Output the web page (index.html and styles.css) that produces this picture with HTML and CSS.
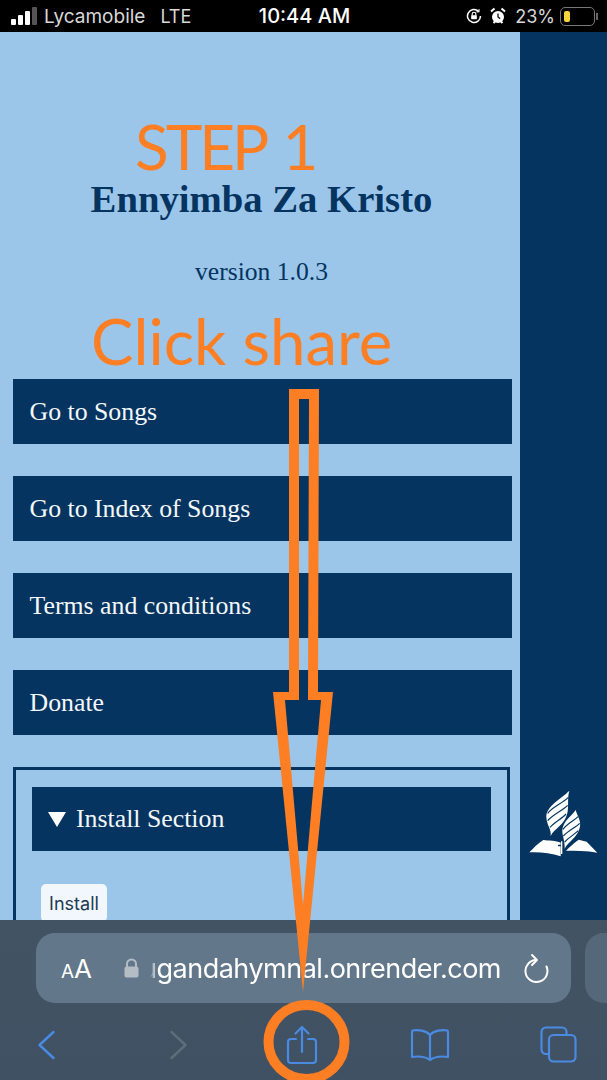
FILE: index.html
```html
<!DOCTYPE html>
<html lang="en">
<head>
    <meta charset="UTF-8">
    <meta name="viewport" content="width=device-width, initial-scale=1.0">
    <title>Ennyimba Za Kristo</title>
    <link rel="stylesheet" href="styles.css">
</head>
<body>
    <div id="phone">
        <div class="status-bar">
            <div class="status-left">
                <svg class="signal" width="27" height="18" viewBox="0 0 27 18">
                    <rect x="0" y="12" width="5" height="6" rx="1" fill="#fff"/>
                    <rect x="7" y="8" width="5" height="10" rx="1" fill="#fff"/>
                    <rect x="14" y="4" width="5" height="14" rx="1" fill="#fff"/>
                    <rect x="21" y="0" width="5" height="18" rx="1" fill="#555"/>
                </svg>
                <span>Lycamobile</span>
                <span class="network">LTE</span>
            </div>
            <div class="status-time">10:44 AM</div>
            <div class="status-right">
                <svg width="16" height="16" viewBox="0 0 16 16" fill="none" stroke="#fff" stroke-width="1.5">
                    <path d="M14.5 8a6.5 6.5 0 1 1-2-4.7"/>
                    <path d="M10.5 3.8l2.4-.2.2-2.4" stroke-width="1.2"/>
                    <rect x="5.2" y="7.2" width="5.6" height="4" fill="#fff" stroke="none"/>
                    <path d="M6.2 7.2V6a1.8 1.8 0 0 1 3.6 0v1.2" stroke-width="1.1"/>
                </svg>
                <svg class="alarm" width="16" height="18" viewBox="0 0 16 18">
                    <circle cx="8" cy="10" r="6" fill="#fff"/>
                    <path d="M8 6.5V10l2.2 1.6" fill="none" stroke="#111" stroke-width="1.3"/>
                    <path d="M1 4.5L4.5 1.5M15 4.5L11.5 1.5M3.5 16l1.5-1.5M12.5 16L11 14.5" stroke="#fff" stroke-width="2"/>
                </svg>
                <span class="percent">23%</span>
                <div class="battery"><div class="battery-level"></div></div>
                <div class="battery-nub"></div>
            </div>
        </div>

        <div class="page">
            <div class="main">
                <h1>Ennyimba Za Kristo</h1>
                <p class="version">version 1.0.3</p>
                <a class="menu-btn">Go to Songs</a>
                <a class="menu-btn">Go to Index of Songs</a>
                <a class="menu-btn">Terms and conditions</a>
                <a class="menu-btn">Donate</a>
                <div class="install-section">
                    <div class="install-head"><span class="caret"></span>Install Section</div>
                    <button class="install-btn">Install</button>
                </div>
            </div>
            <div class="side">
                <svg class="logo" width="87" height="100" viewBox="30 0 261 300">
                    <path fill="#fff" d="M178 62C152 88 108 108 109 142c1 24 16 36 13 56 10-22 42-32 50-68 5-24-1-44 6-68z"/>
                    <path fill="none" stroke="#04345f" stroke-width="3.500" d="M175 82c-18 18-50 30-62 48M173 106c-16 16-46 28-60 46M168 132c-12 14-34 24-48 40"/>
                    <path fill="#fff" d="M197 120c-14 20-38 34-40 60-1 18 8 30 7 56 8-20 40-34 46-66 3-18-8-32-13-50z"/>
                    <path fill="none" stroke="#04345f" stroke-width="3.500" d="M204 140c-12 12-34 22-45 38M209 160c-12 12-34 22-49 38M205 182c-10 10-28 20-41 34"/>
                    <path fill="#fff" d="M58 247c12-12 26-28 42-37 16 2 38 2 52 8v6h-8v5h8v30c-30-10-64-14-94-12z"/>
                    <path fill="#fff" d="M168 242c12-12 24-24 38-33 8 2 16 4 24 6l32 33c-32-6-66-6-94-6z"/>
                    <path fill="#fff" d="M153 214h4v38h-4z"/>
                </svg>
            </div>
        </div>

        <div class="toolbar">
            <div class="url-row">
                <div class="url-pill">
                    <span class="text-size"><span class="small-a">A</span>A</span>
                    <svg class="lock" width="17" height="20" viewBox="0 0 17 20">
                        <path d="M4 9V6a4.5 4.5 0 0 1 9 0v3" fill="none" stroke="#b4bcc6" stroke-width="2"/>
                        <rect x="1.5" y="8.5" width="14" height="11" rx="2" fill="#b4bcc6"/>
                    </svg>
                    <span class="url">ugandahymnal.onrender.com</span>
                    <svg class="reload" width="26" height="30" viewBox="0 0 26 30" fill="none" stroke="#fff" stroke-width="2" stroke-linecap="round" stroke-linejoin="round">
                        <path d="M23.500 13.500A11 11 0 1 1 13 7"/>
                        <path d="M9 2l5 5-5 5"/>
                    </svg>
                </div>
                <div class="next-pill"></div>
            </div>
            <div class="nav-row">
                <svg width="19" height="30" viewBox="0 0 19 30" fill="none" stroke="#4a8ae2" stroke-width="2.4" stroke-linecap="round" stroke-linejoin="round">
                    <path d="M16.5 2L2.5 15l14 13"/>
                </svg>
                <svg class="nav-forward" width="19" height="30" viewBox="0 0 19 30" fill="none" stroke="#5d6d7c" stroke-width="2.4" stroke-linecap="round" stroke-linejoin="round">
                    <path d="M2.5 2l14 13-14 13"/>
                </svg>
                <svg width="32" height="40" viewBox="0 0 32 40" fill="none" stroke="#4a8ae2" stroke-width="2.2" stroke-linecap="round" stroke-linejoin="round">
                    <path d="M10 14H5a3 3 0 0 0-3 3v18a3 3 0 0 0 3 3h22a3 3 0 0 0 3-3V17a3 3 0 0 0-3-3h-5"/>
                    <path d="M16 27V2M9.5 8.500L16 2l6.500 6.500"/>
                </svg>
                <svg width="40" height="34" viewBox="0 0 40 34" fill="none" stroke="#4a8ae2" stroke-width="2.2" stroke-linecap="round" stroke-linejoin="round">
                    <path d="M20 7C16 2.500 8 1.500 2.500 2.500 2 3 2 4 2 5v24c6-1 13-.5 18 3 5-3.500 12-4 18-3V5c0-1 0-2-.5-2.500C32 1.500 24 2.500 20 7zM20 7v25"/>
                </svg>
                <svg width="37" height="37" viewBox="0 0 37 37" fill="none" stroke="#4a8ae2" stroke-width="2.2" stroke-linejoin="round">
                    <path d="M8 28H6a4.500 4.500 0 0 1-4.500-4.500V6A4.500 4.500 0 0 1 6 1.500h16A4.500 4.500 0 0 1 26.500 6v2"/>
                    <rect x="9" y="9" width="26.500" height="26.500" rx="4.500"/>
                </svg>
            </div>
        </div>

        <!-- orange notes drawn over the screenshot -->
        <div class="note note-step">STEP 1</div>
        <div class="note note-click">Click share</div>
        <svg class="markup" width="607" height="1080" viewBox="0 0 607 1080">
            <path fill="#fd7e23" fill-rule="evenodd" d="M289 389H319L318 692H333L303 992 273 692H289ZM299 399V700H285L303 905 321 700H308L309 399Z"/>
            <ellipse cx="306.500" cy="1042" rx="38" ry="37" fill="none" stroke="#fd7e23" stroke-width="10"/>
        </svg>
    </div>
</body>
</html>
```

FILE: styles.css
```css
* {
    box-sizing: border-box;
    margin: 0;
    padding: 0;
}
body {
    background-color: black;
    overflow: hidden;
}
#phone {
    position: relative;
    display: flex;
    flex-direction: column;
    width: 607px;
    height: 1080px;
    overflow: hidden;
}

/* status bar */
.status-bar {
    display: grid;
    grid-template-columns: 1fr auto 1fr;
    align-items: center;
    height: 32px;
    padding: 0 9px 0 11px;
    background-color: black;
    color: #f2f2f2;
    font-family: Inter, "Noto Sans", sans-serif;
    font-size: 19px;
}
.status-left {
    display: flex;
    align-items: center;
    gap: 6px;
    color: #d8d8d8;
}
.network {
    margin-left: 9px;
    font-size: 18px;
}
.status-time {
    font-size: 20px;
    font-weight: 500;
    color: #fff;
}
.status-right {
    display: flex;
    align-items: center;
    justify-content: flex-end;
    color: #d8d8d8;
}
.alarm {
    margin-left: 8px;
}
.percent {
    margin: 0 5px 0 9px;
    font-size: 18px;
}
.battery {
    width: 35px;
    height: 19px;
    padding: 3px;
    border: 1px solid #777;
    border-radius: 5px;
}
.battery-level {
    width: 6px;
    height: 100%;
    background-color: #f8d53c;
    border-radius: 2px;
}
.battery-nub {
    width: 2px;
    height: 7px;
    margin-left: 1px;
    background-color: #666;
}

/* page behind the toolbar */
.page {
    display: flex;
    flex: 1;
    min-height: 0;
    overflow: hidden;
}
.main {
    width: 520px;
    padding: 146px 10px 0 13px;
    background-color: #9bc6ea;
    font-family: "Liberation Serif", serif;
}
.main h1 {
    font-size: 38.7px;
    line-height: 43px;
    text-align: center;
    color: #04345f;
}
.version {
    margin: 37px 0 0;
    font-size: 25.6px;
    line-height: 28px;
    text-align: center;
    color: #04345f;
}
.menu-btn {
    display: flex;
    align-items: center;
    height: 65px;
    margin: 0 -2px 32px 0;
    padding-left: 16.5px;
    background-color: #04345f;
    color: #f4f8fc;
    font-size: 25.8px;
}
.version + .menu-btn {
    margin-top: 93px;
}
.install-section {
    padding: 17px 16px 16px;
    border: 3px solid #04345f;
}
.install-head {
    display: flex;
    align-items: center;
    height: 64px;
    padding-left: 16px;
    background-color: #04345f;
    color: #f4f8fc;
    font-size: 25.8px;
}
.caret {
    width: 0;
    height: 0;
    margin-right: 10px;
    border-left: 9px solid transparent;
    border-right: 9px solid transparent;
    border-top: 15px solid #fff;
}
.install-btn {
    display: block;
    width: 66px;
    height: 38px;
    margin: 33px 0 0 9px;
    border: none;
    border-radius: 5px;
    background-color: #f1f7fc;
    color: #1d3a54;
    font-family: Inter, sans-serif;
    font-size: 18px;
}
.side {
    flex: 1;
    padding-top: 738px;
    background-color: #04345f;
}
.logo {
    display: block;
}

/* safari toolbar */
.toolbar {
    height: 160px;
    padding-top: 13px;
    background-image: linear-gradient(#425464, #3f5162);
}
.url-row {
    display: flex;
    gap: 14px;
    padding-left: 36px;
}
.url-pill {
    display: flex;
    flex: none;
    align-items: center;
    width: 535px;
    height: 70px;
    padding-left: 25px;
    border-radius: 19px;
    background-color: #62778a;
    color: #fff;
    font-family: Inter, "Noto Sans", sans-serif;
}
.next-pill {
    flex: none;
    width: 60px;
    height: 70px;
    border-radius: 19px;
    background-color: #55687a;
}
.text-size {
    width: 62px;
    font-size: 26px;
}
.small-a {
    font-size: 19px;
}
.lock {
    flex: none;
    margin-right: 1px;
}
.url {
    flex: none;
    width: 360px;
    font-size: 27px;
    white-space: nowrap;
    letter-spacing: -0.5px;
    mask-image: linear-gradient(to right, transparent 9px, #000 16px);
}
.reload {
    flex: none;
    margin-left: 22px;
}
.nav-row {
    display: grid;
    grid-template-columns: repeat(5, 128px);
    align-items: center;
    justify-items: center;
    height: 77px;
    margin-left: -18px;
    padding-top: 6px;
}
.nav-forward {
    margin-left: 8px;
}

/* annotations */
.note {
    position: absolute;
    color: #fd7e23;
    font-family: Lato, sans-serif;
    line-height: 56px;
    white-space: nowrap;
}
.note-step {
    left: 135px;
    top: 118px;
    font-size: 62px;
    letter-spacing: -3px;
    word-spacing: 5px;
}
.note-click {
    left: 91px;
    top: 313px;
    font-size: 63.5px;
}
.markup {
    position: absolute;
    left: 0;
    top: 0;
}
```
